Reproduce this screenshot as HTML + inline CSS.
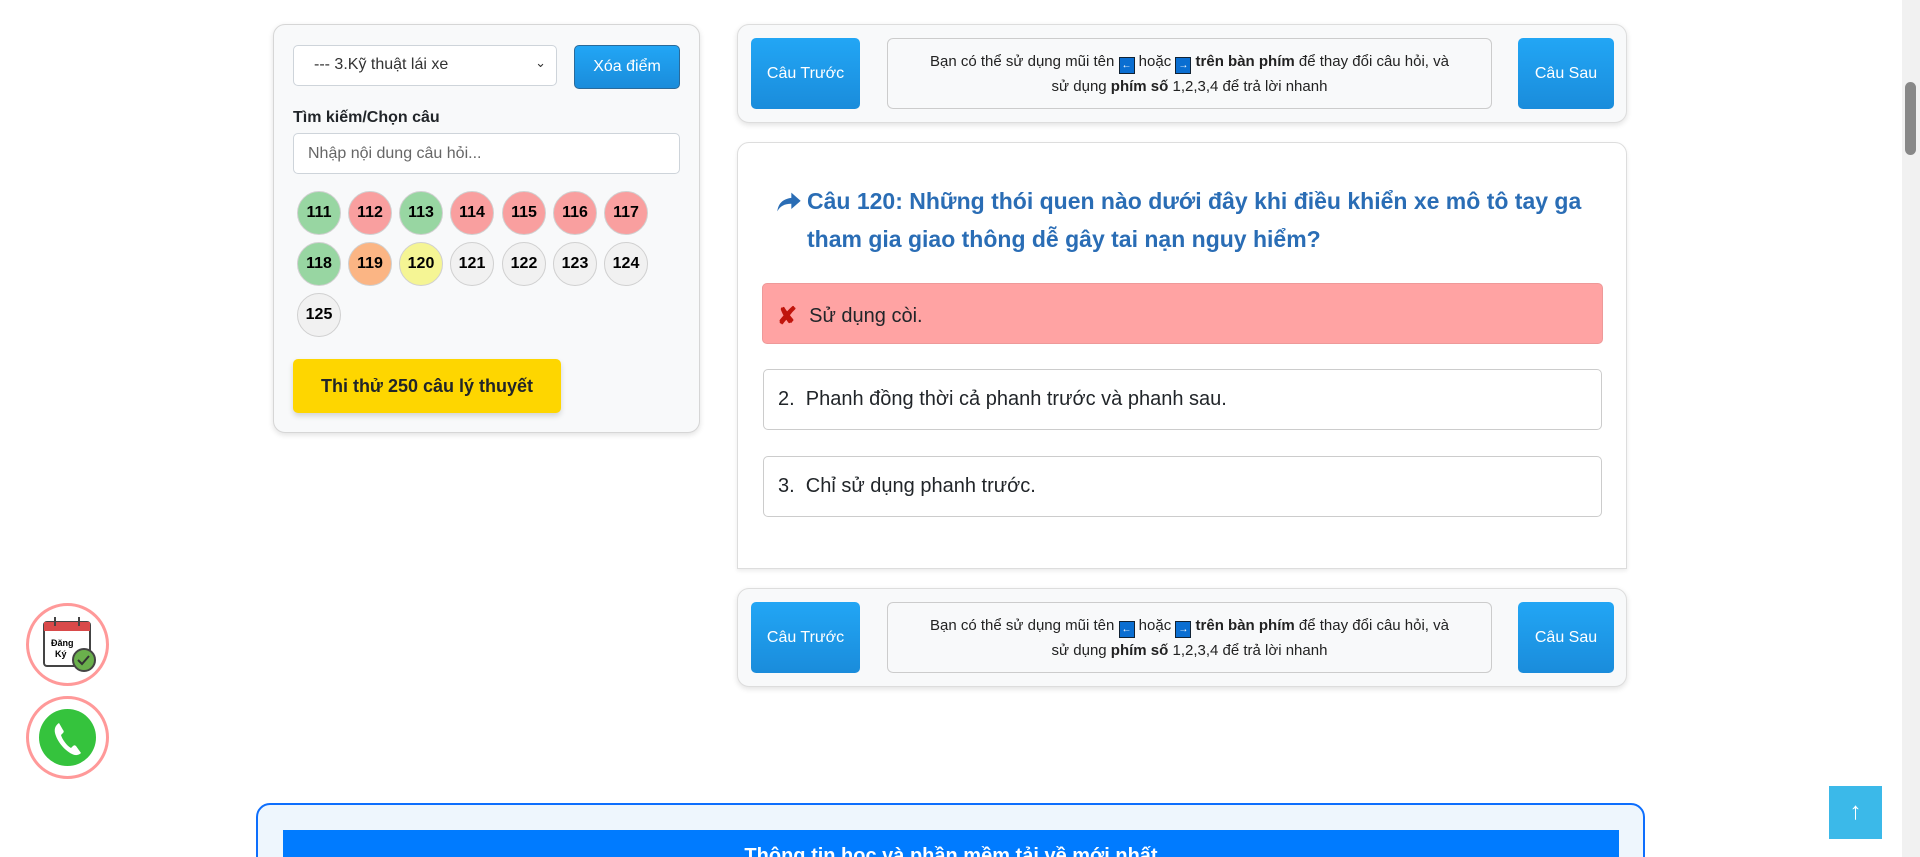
<!DOCTYPE html>
<html style="width:1920px;height:857px;overflow:hidden"><head><meta charset="utf-8"><style>
*{box-sizing:border-box;margin:0;padding:0}
body{width:1920px;height:857px;overflow:hidden;background:#fff;font-family:"Liberation Sans",sans-serif;position:relative;color:#212529}
.abs{position:absolute}
.panel{left:273px;top:24px;width:427px;height:409px;background:#f8f9fa;border:1px solid #d6d6d6;border-radius:12px;box-shadow:0 2px 6px rgba(0,0,0,.12)}
.sel{left:293px;top:45px;width:264px;height:41px;background:#fff;border:1px solid #ced4da;border-radius:5px;font-size:16px;padding:10px 0 0 20px;color:#333}
.btnb{background:linear-gradient(#22a6f5,#1a8cdb);color:#fff;border-radius:5px;display:flex;align-items:center;justify-content:center;font-size:16px}
.circ{width:44px;height:44px;border-radius:50%;border:1px solid #d0d0d0;display:flex;align-items:center;justify-content:center;font-weight:bold;font-size:16px;color:#000}
.g{background:#98d6a2}.r{background:#f99f9f}.o{background:#fbb584}.y{background:#f5f594}.w{background:#f1f1f1}
.nav{left:737px;width:890px;height:99px;background:#f8f9fa;border:1px solid #ddd;border-radius:12px;box-shadow:0 2px 6px rgba(0,0,0,.12)}
.info{position:absolute;left:149px;top:13px;width:605px;height:71px;border:1px solid #ccc;border-radius:6px;background:#f8f9fa;font-size:15px;text-align:center;line-height:25px;padding-top:10px;color:#222}
.k{display:inline-block;width:16px;height:17px;background:#0a6ed1;border:1px solid #123;color:#fff;font-size:10px;line-height:15px;vertical-align:-2px}
.ans{left:763px;width:839px;height:61px;border:1px solid #ccc;border-radius:5px;background:#fff;font-size:20px;padding:18px 0 0 14px}
</style></head><body>
<div class="abs panel"></div>
<div class="abs sel">--- 3.Kỹ thuật lái xe<span style="position:absolute;right:10px;top:9px;font-size:13px">&#8964;</span></div>
<div class="abs btnb" style="left:574px;top:45px;width:106px;height:44px;border:1px solid #2a6a9a">Xóa điểm</div>
<div class="abs" style="left:293px;top:109px;font-weight:bold;font-size:16px">Tìm kiếm/Chọn câu</div>
<div class="abs" style="left:293px;top:133px;width:387px;height:41px;background:#fff;border:1px solid #ced4da;border-radius:5px;font-size:16px;color:#666;padding:11px 0 0 14px">Nhập nội dung câu hỏi...</div>
<div class="abs circ g" style="left:297px;top:191px">111</div>
<div class="abs circ r" style="left:348px;top:191px">112</div>
<div class="abs circ g" style="left:399px;top:191px">113</div>
<div class="abs circ r" style="left:450px;top:191px">114</div>
<div class="abs circ r" style="left:502px;top:191px">115</div>
<div class="abs circ r" style="left:553px;top:191px">116</div>
<div class="abs circ r" style="left:604px;top:191px">117</div>
<div class="abs circ g" style="left:297px;top:242px">118</div>
<div class="abs circ o" style="left:348px;top:242px">119</div>
<div class="abs circ y" style="left:399px;top:242px">120</div>
<div class="abs circ w" style="left:450px;top:242px">121</div>
<div class="abs circ w" style="left:502px;top:242px">122</div>
<div class="abs circ w" style="left:553px;top:242px">123</div>
<div class="abs circ w" style="left:604px;top:242px">124</div>
<div class="abs circ w" style="left:297px;top:293px">125</div>
<div class="abs" style="left:293px;top:359px;width:268px;height:54px;background:#fed600;border-radius:5px;font-weight:bold;font-size:18px;display:flex;align-items:center;justify-content:center;box-shadow:0 3px 6px rgba(0,0,0,.15)">Thi thử 250 câu lý thuyết</div>

<div class="abs nav" style="top:24px">
<div class="abs btnb" style="left:13px;top:13px;width:109px;height:71px">Câu Trước</div>
<div class="info">Bạn có thể sử dụng mũi tên <span class="k">←</span> hoặc <span class="k">→</span> <b>trên bàn phím</b> để thay đổi câu hỏi, và<br>sử dụng <b>phím số</b> 1,2,3,4 để trả lời nhanh</div>
<div class="abs btnb" style="left:780px;top:13px;width:96px;height:71px">Câu Sau</div>
</div>

<div class="abs" style="left:737px;top:142px;width:890px;height:427px;background:#fff;border:1px solid #ddd;border-radius:12px 12px 0 0;box-shadow:0 2px 4px rgba(0,0,0,.08)"></div>
<svg class="abs" style="left:775px;top:188px" width="28" height="28" viewBox="0 0 24 24"><path d="M14 4l8 7-8 7v-4.5C8 13.5 4.5 15.5 2 20c.8-6 4-10.5 12-11.5z" fill="#2a6db5"/></svg>
<div class="abs" style="left:807px;top:182px;width:800px;font-size:23px;font-weight:bold;color:#2a6db5;line-height:38px">Câu 120: Những thói quen nào dưới đây khi điều khiển xe mô tô tay ga tham gia giao thông dễ gây tai nạn nguy hiểm?</div>
<div class="abs ans" style="top:283px;left:762px;width:841px;background:#ffa3a3;border-color:#e99;padding-left:14px"><span style="color:#c0150c;font-weight:bold;font-size:24px;margin-right:12px;vertical-align:-2px">✘</span>Sử dụng còi.</div>
<div class="abs ans" style="top:369px">2.&nbsp; Phanh đồng thời cả phanh trước và phanh sau.</div>
<div class="abs ans" style="top:456px">3.&nbsp; Chỉ sử dụng phanh trước.</div>

<div class="abs nav" style="top:588px">
<div class="abs btnb" style="left:13px;top:13px;width:109px;height:71px">Câu Trước</div>
<div class="info">Bạn có thể sử dụng mũi tên <span class="k">←</span> hoặc <span class="k">→</span> <b>trên bàn phím</b> để thay đổi câu hỏi, và<br>sử dụng <b>phím số</b> 1,2,3,4 để trả lời nhanh</div>
<div class="abs btnb" style="left:780px;top:13px;width:96px;height:71px">Câu Sau</div>
</div>

<div class="abs" style="left:26px;top:603px;width:83px;height:83px;border:3px solid #f99;border-radius:50%;background:#fff">
<svg width="77" height="77" viewBox="0 0 77 77"><rect x="15" y="16" width="46" height="44" rx="3" fill="#fff" stroke="#444" stroke-width="2"/><rect x="15" y="16" width="46" height="9" fill="#d94a4a"/><line x1="26" y1="11" x2="26" y2="20" stroke="#444" stroke-width="2"/><line x1="50" y1="11" x2="50" y2="20" stroke="#444" stroke-width="2"/><text x="22" y="40" font-size="9" font-weight="bold" font-family="Liberation Sans">Đăng</text><text x="26" y="51" font-size="9" font-weight="bold" font-family="Liberation Sans">Ký</text><circle cx="55" cy="54" r="11" fill="#6ab04c" stroke="#444" stroke-width="2"/><path d="M49 54l4 4 7-8" stroke="#333" stroke-width="2" fill="none"/></svg></div>
<div class="abs" style="left:26px;top:696px;width:83px;height:83px;border:3px solid #f99;border-radius:50%;background:#fff">
<svg class="abs" style="left:10px;top:10px" width="57" height="57" viewBox="0 0 57 57"><circle cx="28.5" cy="28.5" r="28.5" fill="#35c33d"/><path d="M20 14c-3 2-5 5-4 10 2 8 9 17 17 21 4 2 7 1 9-1l-5-7c-1-1-2-1-3 0l-2 2c-4-2-9-9-10-13l2-2c1-1 1-2 0-3z" fill="#fff"/></svg></div>

<div class="abs" style="left:256px;top:803px;width:1389px;height:54px;overflow:hidden">
<div class="abs" style="left:0;top:0;width:1389px;height:120px;border:2px solid #0d6efd;border-radius:14px;background:#eef6fd"></div>
<div class="abs" style="left:27px;top:27px;width:1336px;height:60px;background:#007bff;color:#fff;font-weight:bold;font-size:20px;text-align:center;padding-top:15px">Thông tin hoc và phần mềm tải về mới nhất</div>
</div>

<div class="abs" style="left:1829px;top:786px;width:53px;height:53px;background:#3bb9e9;color:#fff;font-size:24px;font-weight:bold;text-align:center;line-height:52px">↑</div>
<div class="abs" style="left:1902px;top:0;width:18px;height:857px;background:#f1f1f1"></div>
<div class="abs" style="left:1905px;top:82px;width:11px;height:73px;background:#888;border-radius:6px"></div>
</body></html>
